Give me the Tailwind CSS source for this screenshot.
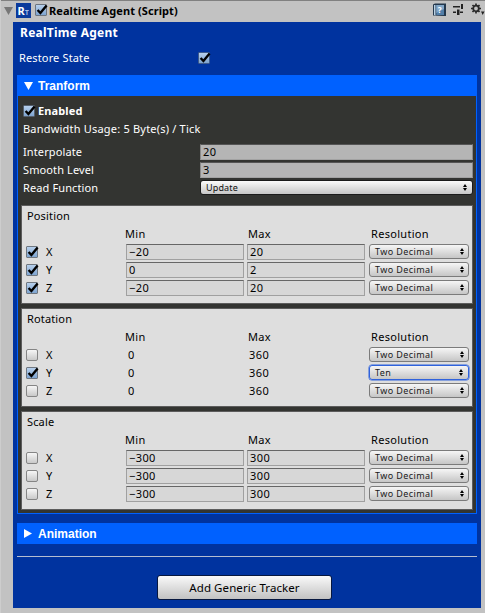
<!DOCTYPE html>
<html lang="en">
<head>
<meta charset="utf-8">
<title>Realtime Agent</title>
<script src="https://cdn.jsdelivr.net/npm/@tailwindcss/browser@4"></script>
</head>
<body class="w-[485px] h-[613px] overflow-hidden bg-[#c2c2c2] border-l border-[#cdcdcd] font-['Noto_Sans','Lucida_Grande',sans-serif] text-[11px] leading-[18px] text-black">
<svg class="hidden">
  <symbol id="check" viewBox="0 0 14 13"><path d="M2.6 7 5.4 10 11.6 2.4" fill="none" stroke="#000" stroke-width="2.4"/></symbol>
  <symbol id="updown" viewBox="0 0 4 7"><path d="M2 0 4 3H0ZM0 4H4L2 7Z" fill="#000"/></symbol>
</svg>

<header class="flex h-[22px] border-t border-[#808080] pl-[3px] pt-px">
  <svg class="w-[9px] h-[8px] mt-[5px]" viewBox="0 0 9 8"><path d="M0 0H9L4.5 8Z" fill="#777"/></svg>
  <svg class="w-[15px] h-[15px] ml-[3px] mt-px" viewBox="0 0 15 15"><rect width="15" height="15" fill="#0b3a9c"/><text x="1.5" y="11.5" font-family="Noto Sans" font-weight="700" font-size="11" fill="#fff">R</text><text x="9" y="11.5" font-family="Noto Sans" font-weight="700" font-size="6.5" fill="#a9bfe8">T</text></svg>
  <span class="relative w-[12px] h-[12px] ml-[4px] mt-[2px] rounded-[1px] border border-[#6c7580] bg-linear-to-b from-[#b7d0ec] to-[#7ea4d0]"><svg class="absolute -left-px -top-[2px] w-[14px] h-[13px]"><use href="#check"/></svg></span>
  <h1 class="ml-[2px] font-bold tracking-[0.08px] whitespace-nowrap">Realtime Agent (Script)</h1>
  <svg class="w-[13px] h-[14px] ml-auto mt-px" viewBox="0 0 13 14"><path d="M0 1.5 2 .5H13V13H11L0 12.5Z" fill="#24384d"/><path d="M1 2H2.5V12.5L1 12Z" fill="#b9d2e6"/><path d="M3.3 2H11V12H3.3Z" fill="#527fa9"/><path d="M3.3 2H11V6L3.3 10Z" fill="#82a7c8"/><text x="4.8" y="9.9" font-family="Noto Sans" font-weight="700" font-size="8" fill="#fff">?</text></svg>
  <svg class="w-[11px] h-[13px] ml-[7px] mt-px mr-px" viewBox="0 0 11 13"><g fill="#222"><path d="M0 3H7V4.5H0ZM8 1H10V6H8ZM0 8.5H3V10H0ZM4 6.5H6.5V12H4ZM7 8.5H10V10H7Z"/></g></svg>
  <svg class="w-[14px] h-[13px] ml-[6px] mt-px" viewBox="0 0 14 13"><circle cx="5" cy="5.5" r="2.8" fill="none" stroke="#2a2a2a" stroke-width="1.8"/><path d="M5 .5V2.5M5 8.5V10.5M0 5.5H2M8 5.5H10M1.5 2 2.8 3.3M8.5 2 7.2 3.3M1.5 9 2.8 7.7M8.5 9 7.2 7.7" stroke="#2a2a2a" stroke-width="1.7"/><path d="M10 8.5H13.5L11.7 12Z" fill="#222"/></svg>
</header>

<main class="ml-[12px] w-[468px] h-[586px] bg-[#00339f] px-[4px] pt-[2px] text-white">
  <h2 class="pl-[3px] text-[12px] font-bold tracking-[0.26px]">RealTime Agent</h2>
  <div class="flex pl-[2px] mt-[7px] h-[18px]">
    <span class="w-[179px] tracking-[0.14px]">Restore State</span>
    <span class="relative w-[12px] h-[12px] mt-[3px] rounded-[1px] border border-[#3f5c8c] bg-linear-to-b from-[#b7d0ec] to-[#7ea4d0]"><svg class="absolute -left-px -top-[2px] w-[14px] h-[13px]"><use href="#check"/></svg></span>
  </div>

  <section class="mt-[8px] w-[460px] h-[439px] border border-t-0 border-[#0061ff] bg-[#333431]">
    <h3 class="flex items-center h-[21px] -mx-px bg-[#0061ff] pl-[7px] font-['Liberation_Sans',sans-serif] text-[12px] font-bold">
      <svg class="w-[9px] h-[8px] mr-[5px]" viewBox="0 0 9 8"><path d="M0 0H9L4.5 8Z" fill="#fff"/></svg><span>Tranform</span></h3>
    <div class="flex pl-[5px] pt-[6px] h-[24px]">
      <span class="relative w-[12px] h-[12px] mt-[3px] rounded-[1px] border border-[#55606d] bg-linear-to-b from-[#b7d0ec] to-[#7ea4d0]"><svg class="absolute -left-px -top-[2px] w-[14px] h-[13px]"><use href="#check"/></svg></span>
      <b class="ml-[3px] tracking-[0.12px]">Enabled</b>
    </div>
    <p class="pl-[5px] h-[23px] tracking-[0.2px]">Bandwidth Usage: 5 Byte(s) / Tick</p>
    <div class="flex h-[18px] pl-[5px]"><span class="w-[177px] tracking-[0.12px]">Interpolate</span><span class="w-[273px] h-[16px] mt-px border border-[#8a8a8a] border-t-[#555] border-b-[#a2a2a2] bg-[#b5b5b5] pl-[2px] leading-[13px] text-black tracking-[0.4px]">20</span></div>
    <div class="flex h-[18px] pl-[5px]"><span class="w-[177px] tracking-[0.12px]">Smooth Level</span><span class="w-[273px] h-[16px] mt-px border border-[#8a8a8a] border-t-[#555] border-b-[#a2a2a2] bg-[#b5b5b5] pl-[2px] leading-[13px] text-black tracking-[0.4px]">3</span></div>
    <div class="flex h-[18px] pl-[5px]"><span class="w-[177px] tracking-[0.12px]">Read Function</span><span class="flex items-center justify-between w-[273px] h-[15px] mt-px rounded-[3px] border border-[#1b1b1b] bg-linear-to-b from-[#fbfbfb] to-[#c6c6c6] pl-[5px] pr-[5px] text-[9px] text-[#111] tracking-[0.15px]">Update<svg class="w-[4px] h-[7px]"><use href="#updown"/></svg></span></div>
    <div id="cards" class="flex flex-col gap-[4px] mt-[8px] ml-[3px]"></div>
  </section>

  <section class="mt-[9px] h-[21px] bg-[#0061ff]">
    <h3 class="flex items-center h-[21px] pl-[7px] font-['Liberation_Sans',sans-serif] text-[12px] font-bold">
      <svg class="w-[8px] h-[9px] mr-[6px]" viewBox="0 0 8 9"><path d="M0 0V9L8 4.5Z" fill="#fff"/></svg><span>Animation</span></h3>
  </section>
  <hr class="mt-[12px] border-0 h-px bg-[#b4bdd0]">
  <button class="block mt-[18px] ml-[140px] w-[175px] h-[25px] rounded-[3px] border border-[#06173f] bg-linear-to-b from-[#fafafa] to-[#c2c2c2] text-[11.5px] leading-[23px] text-black tracking-[0.08px]">Add Generic Tracker</button>
</main>

<script>
const groups = [
  { title: 'Position', on: [1, 1, 1], min: ['−20', '0', '−20'], max: ['20', '2', '20'], res: ['Two Decimal', 'Two Decimal', 'Two Decimal'] },
  { title: 'Rotation', plain: true, on: [0, 1, 0], min: ['0', '0', '0'], max: ['360', '360', '360'], res: ['Two Decimal', 'Ten', 'Two Decimal'] },
  { title: 'Scale', on: [0, 0, 0], min: ['−300', '−300', '−300'], max: ['300', '300', '300'], res: ['Two Decimal', 'Two Decimal', 'Two Decimal'] },
];
const box = on => on
  ? '<span class="relative w-[12px] h-[12px] mt-[3px] border border-[#6f7780] rounded-[1px] bg-linear-to-b from-[#b7d0ec] to-[#7ea4d0]"><svg class="absolute -left-px -top-[2px] w-[14px] h-[13px]"><use href="#check"/></svg></span>'
  : '<span class="w-[12px] h-[12px] mt-[3px] border border-[#858585] rounded-[2px] bg-linear-to-b from-[#f6f6f6] to-[#c9c9c9]"></span>';
const value = (v, plain) => plain
  ? `<span class="w-[118px] pl-[2px] tracking-[0.4px]">${v}</span>`
  : `<span class="w-[118px] h-[16px] mt-px border border-[#a0a0a0] border-t-[#666] bg-[#d7d7d7] pl-[2px] leading-[13px] tracking-[0.4px]">${v}</span>`;
const popup = v => `<span class="flex items-center justify-between w-[100px] h-[15px] mt-px rounded-[3px] border ${v === 'Ten' ? 'border-[#2f62dc] ring-[0.5px] ring-[#2f62dc] pr-[5px]' : 'border-[#7b7b7b] pr-[4px]'} bg-linear-to-b from-[#f6f6f6] to-[#c6c6c6] pl-[5px] text-[9px] text-[#1a1a1a] tracking-[0.4px]">${v}<svg class="w-[4px] h-[7px]"><use href="#updown"/></svg></span>`;
document.getElementById('cards').innerHTML = groups.map(g => `
  <div class="w-[452px] h-[99px] border border-[#5c5c5c] bg-[#dedede] text-black pl-[4px] pt-px">
    <div class="pl-px h-[18px] tracking-[0.15px]">${g.title}</div>
    <div class="flex h-[18px] pl-[99px] tracking-[0.3px]"><span class="w-[123px]">Min</span><span class="w-[123px]">Max</span><span>Resolution</span></div>
    ${['X', 'Y', 'Z'].map((a, i) => `<div class="flex h-[18px]">${box(g.on[i])}<span class="w-[80px] ml-[8px]">${a}</span>${value(g.min[i], g.plain)}<span class="w-[3px]"></span>${value(g.max[i], g.plain)}<span class="w-[4px]"></span>${popup(g.res[i])}</div>`).join('')}
  </div>`).join('');
</script>
</body>
</html>
